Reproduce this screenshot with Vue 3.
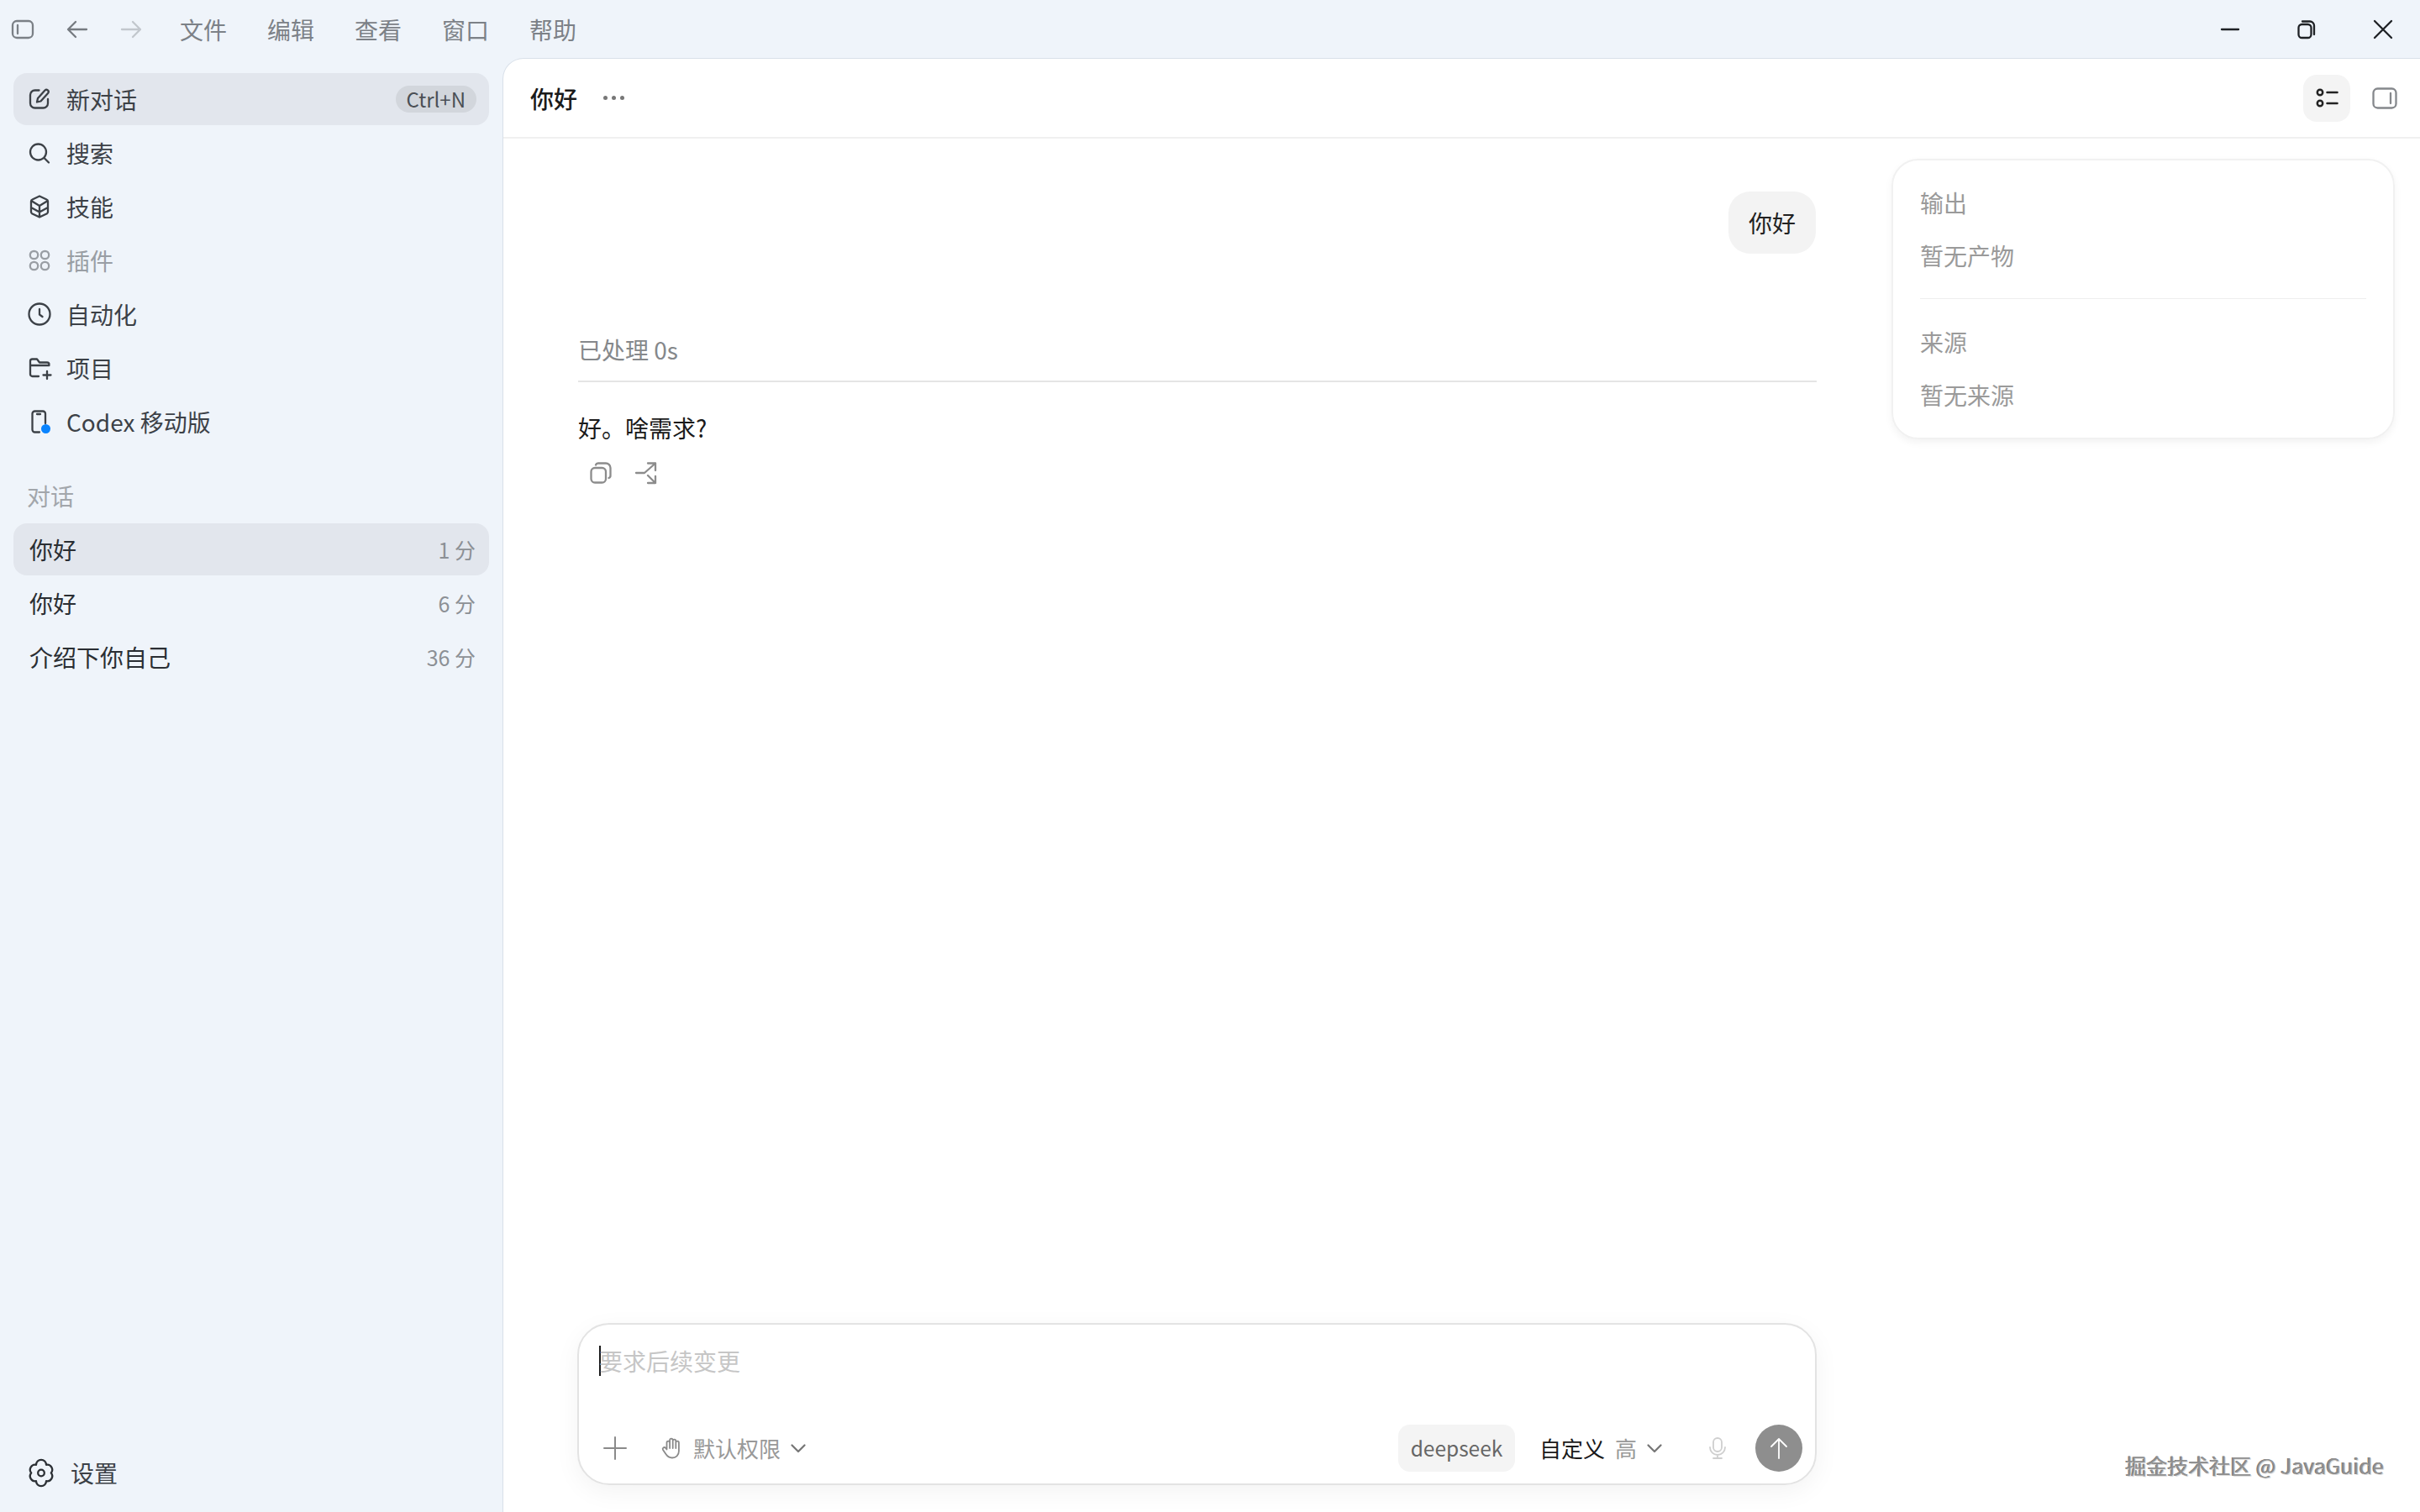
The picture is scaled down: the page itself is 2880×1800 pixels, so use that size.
<template>
  <div class="app">
    <!-- 顶部标题栏 -->
    <header class="titlebar">
      <div class="tb-left">
        <svg class="ic tb-toggle" viewBox="0 0 28 24"><rect x="2" y="2" width="24" height="20" rx="5" /><path d="M8 7v10" /></svg>
        <svg class="ic tb-arrow" viewBox="0 0 26 24"><path d="M24 12H3M11 3l-9 9 9 9" /></svg>
        <svg class="ic tb-arrow off" viewBox="0 0 26 24"><path d="M2 12h21M15 3l9 9-9 9" /></svg>
        <nav class="menu">
          <span v-for="m in menus" :key="m">{{ m }}</span>
        </nav>
      </div>
      <div class="win-ctrl">
        <svg class="ic" viewBox="0 0 24 24"><path d="M2 12h20" /></svg>
        <svg class="ic" viewBox="0 0 24 24"><rect x="2.5" y="6" width="15" height="16" rx="4" /><path d="M7 2.5h9a5 5 0 0 1 5 5V18" /></svg>
        <svg class="ic" viewBox="0 0 24 24"><path d="M2 2l20 20M22 2L2 22" /></svg>
      </div>
    </header>

    <div class="body">
      <!-- 侧边栏 -->
      <aside class="sidebar">
        <div class="nav">
          <div v-for="n in navs" :key="n.label" class="row nav-row" :class="{ active: n.active, muted: n.muted }">
            <svg class="ic nav-ic" viewBox="0 0 28 28">
              <path :d="n.icon" />
              <circle v-if="n.dot" cx="21.5" cy="22.5" r="5.5" class="dot" />
            </svg>
            <span class="row-label">{{ n.label }}</span>
            <kbd v-if="n.kbd">{{ n.kbd }}</kbd>
          </div>
        </div>

        <div class="section-title">对话</div>
        <div class="threads">
          <div v-for="t in threads" :key="t.title" class="row thread-row" :class="{ active: t.active }">
            <span class="row-label">{{ t.title }}</span>
            <span class="time">{{ t.time }}</span>
          </div>
        </div>

        <div class="settings">
          <svg class="ic gear" viewBox="0 0 28 29">
            <path d="M8 4.8A6 6 0 0 1 20 4.8 6 6 0 0 1 25.8 14.5 6 6 0 0 1 20 24.2 6 6 0 0 1 8 24.2 6 6 0 0 1 2.2 14.5 6 6 0 0 1 8 4.8z" />
            <circle cx="14" cy="14.5" r="3.8" />
          </svg>
          <span>设置</span>
        </div>
      </aside>

      <!-- 主面板 -->
      <main class="panel">
        <div class="panel-head">
          <div class="head-title">
            <strong>你好</strong>
            <span class="more"><i></i><i></i><i></i></span>
          </div>
          <div class="head-tools">
            <button class="tool-btn">
              <svg class="ic" viewBox="0 0 26 24"><circle cx="4.5" cy="5" r="3.2" /><circle cx="4.5" cy="18" r="3.2" /><path d="M13 5h12M13 18h12" /></svg>
            </button>
            <svg class="ic side-ic" viewBox="0 0 30 26"><rect x="1.5" y="1.5" width="27" height="23" rx="5" /><path d="M22 7v12" /></svg>
          </div>
        </div>

        <div class="panel-body">
          <section class="chat">
            <div class="thread">
              <div class="bubble">你好</div>
              <div class="processed">已处理 0s</div>
              <p class="answer">好。啥需求?</p>
              <div class="actions">
                <svg class="ic" viewBox="0 0 26 26"><rect x="1.5" y="7" width="17.5" height="17.5" rx="4.5" /><path d="M7 3.5A3 3 0 0 1 10 1.5h9a5.5 5.5 0 0 1 5.5 5.5v9a3 3 0 0 1-2 3" /></svg>
                <svg class="ic" viewBox="0 0 26 26"><path d="M1 13h10L24 1.5M15 1.5h9V10M15 16l9 9M15 25h9v-8" /></svg>
              </div>
            </div>

            <div class="composer">
              <div class="input-line">
                <span class="caret"></span>
                <span class="placeholder">要求后续变更</span>
              </div>
              <div class="composer-bar">
                <svg class="ic bar-plus" viewBox="0 0 26 26"><path d="M13 0v26M0 13h26" /></svg>
                <div class="perm">
                  <svg class="ic hand" viewBox="0 0 24 26"><path d="M5.5 14V6.5a1.8 1.8 0 0 1 3.6 0V3.5a1.8 1.8 0 0 1 3.6 0v1a1.8 1.8 0 0 1 3.6 0v2a1.8 1.8 0 0 1 3.6 0v10c0 5-3.5 8-8 8-3.5 0-5.5-1.5-7.500-4.500L1 15a1.9 1.9 0 0 1 3-2.300l1.500 1.800M9.100 6.500V13M12.700 4.500V13M16.300 6.500V13" /></svg>
                  <span>默认权限</span>
                  <svg class="ic chev" viewBox="0 0 18 11"><path d="M1.5 1.5L9 9l7.5-7.5" /></svg>
                </div>
                <div class="bar-right">
                  <span class="model">deepseek</span>
                  <div class="effort">
                    <span class="effort-name">自定义</span>
                    <span class="effort-level">高</span>
                    <svg class="ic chev" viewBox="0 0 18 11"><path d="M1.5 1.5L9 9l7.5-7.5" /></svg>
                  </div>
                  <svg class="ic mic" viewBox="0 0 22 26"><rect x="6" y="1" width="10" height="16" rx="5" /><path d="M2 12a9 9 0 0 0 18 0M11 21v4M6 25h10" /></svg>
                  <button class="send">
                    <svg class="ic" viewBox="0 0 24 26"><path d="M12 25V2M3 11l9-9 9 9" /></svg>
                  </button>
                </div>
              </div>
            </div>
          </section>

          <aside class="outputs">
            <div class="out-title">输出</div>
            <div class="out-text">暂无产物</div>
            <div class="out-divider"></div>
            <div class="out-title">来源</div>
            <div class="out-text">暂无来源</div>
          </aside>
        </div>
      </main>
    </div>

    <div class="watermark">掘金技术社区 @ JavaGuide</div>
  </div>
</template>

<script setup>
const menus = ['文件', '编辑', '查看', '窗口', '帮助']

const navs = [
  {
    label: '新对话',
    active: true,
    kbd: 'Ctrl+N',
    icon: 'M13.5 3.5H8.5A5.5 5.5 0 0 0 3 9v10a5.5 5.5 0 0 0 5.5 5.5h10a5.5 5.5 0 0 0 5.5-5.5v-5M11 17.5l1-4.5 8.5-9.5a2.5 2.5 0 0 1 3.8 3.200L15.500 16.500z'
  },
  { label: '搜索', icon: 'M12.5 3.5a9.5 9.5 0 1 0 0 19 9.5 9.5 0 0 0 0-19zM19.5 20l5.5 5.5' },
  {
    label: '技能',
    icon: 'M14 1.5l8.5 4A2.5 2.5 0 0 1 24 7.8v12.4a2.5 2.5 0 0 1-1.5 2.3l-8.5 4-8.5-4A2.5 2.5 0 0 1 4 20.200V7.800a2.500 2.500 0 0 1 1.500-2.300zM5 7.500l9 5.500 9-5.500M14 13v13.500M4 15l10 5.500M24 15l-10 5.500'
  },
  {
    label: '插件',
    muted: true,
    icon: 'M7.5 2.8a4.7 4.7 0 1 0 0 9.4 4.7 4.7 0 0 0 0-9.4zM20.5 2.8a4.7 4.7 0 1 0 0 9.4 4.7 4.7 0 0 0 0-9.4zM7.5 15.8a4.7 4.7 0 1 0 0 9.4 4.7 4.7 0 0 0 0-9.4zM20.5 15.8a4.7 4.7 0 1 0 0 9.4 4.7 4.7 0 0 0 0-9.4z'
  },
  { label: '自动化', icon: 'M14 1.5a12.5 12.5 0 1 0 0 25 12.5 12.5 0 0 0 0-25zM14 8v6.5l3.5 2.5' },
  {
    label: '项目',
    icon: 'M13 24H5.5A2.5 2.5 0 0 1 3 21.500V6a2.500 2.500 0 0 1 2.500-2.500H11L14 7.500h9a2.500 2.500 0 0 1 2.500 2.500M3 11h22.500M23 18v9M18.500 22.500h9'
  },
  {
    label: 'Codex 移动版',
    dot: true,
    icon: 'M14 26.5H8.5a3 3 0 0 1-3-3V4.500a3 3 0 0 1 3-3h9.500a3 3 0 0 1 3 3V16M11 5h4'
  }
]

const threads = [
  { title: '你好', time: '1 分', active: true },
  { title: '你好', time: '6 分' },
  { title: '介绍下你自己', time: '36 分' }
]
</script>

<style>
html,
body {
  margin: 0;
  background: #eff4fa;
}
</style>

<style scoped>
.app {
  position: relative;
  width: 2880px;
  height: 1800px;
  overflow: hidden;
  display: flex;
  flex-direction: column;
  background: #eff4fa;
  color: #3c4147;
  font-family: "Noto Sans CJK SC", "Open Sans", sans-serif;
  font-size: 28px;
  line-height: 40px;
}

.ic {
  display: block;
  fill: none;
  stroke: currentColor;
  stroke-width: 2.3;
  stroke-linecap: round;
  stroke-linejoin: round;
  flex: none;
  overflow: visible;
}

/* 标题栏 */
.titlebar {
  height: 70px;
  flex: none;
  display: flex;
  align-items: center;
  justify-content: space-between;
}

.tb-left {
  display: flex;
  align-items: center;
  padding-left: 13px;
}

.tb-toggle {
  width: 28px;
  height: 24px;
  color: #7b8086;
}

.tb-arrow {
  width: 26px;
  height: 24px;
  margin-left: 38px;
  color: #767b81;
}

.tb-arrow.off {
  color: #c2c7cd;
}

.menu {
  display: flex;
  gap: 48px;
  margin-left: 45px;
  color: #7c8187;
}

.win-ctrl {
  display: flex;
  align-items: center;
  gap: 67px;
  padding-right: 32px;
  color: #1e2125;
}

.win-ctrl .ic {
  width: 24px;
  height: 24px;
}

/* 侧边栏 */
.body {
  flex: 1;
  min-height: 0;
  display: flex;
}

.sidebar {
  width: 599px;
  flex: none;
  box-sizing: border-box;
  padding: 17px 17px 27px 16px;
  display: flex;
  flex-direction: column;
}

.nav,
.threads {
  display: flex;
  flex-direction: column;
  gap: 2px;
}

.row {
  height: 62px;
  display: flex;
  align-items: center;
  border-radius: 16px;
  padding: 0 16px 0 19px;
}

.nav-row {
  padding-left: 17px;
}

.row.active {
  background: #e2e6ed;
}

.nav-ic {
  width: 28px;
  height: 28px;
  margin-right: 18px;
  color: #3c4147;
}

.muted,
.muted .nav-ic {
  color: #999ea4;
}

.dot {
  fill: #0a84ff;
  stroke: none;
}

.row-label {
  flex: 1;
}

kbd {
  font: inherit;
  font-size: 24px;
  line-height: 32px;
  padding: 0 13px;
  margin-right: -1px;
  border-radius: 16px;
  background: #d2d6dc;
  color: #4a4f55;
}

.section-title {
  margin: 37px 0 13px 16px;
  color: #a2a6ab;
}

.thread-row .row-label {
  color: #2a2e33;
}

.time {
  font-size: 25px;
  color: #8c9095;
}

.settings {
  margin-top: auto;
  padding-left: 19px;
  display: flex;
  align-items: center;
}

.gear {
  width: 28px;
  height: 29px;
  margin-right: 21px;
  color: #2c3035;
}

/* 主面板 */
.panel {
  flex: 1;
  min-width: 0;
  display: flex;
  flex-direction: column;
  background: #fff;
  border-top-left-radius: 24px;
  box-shadow: 0 0 0 1px #d9e0e9;
}

.panel-head {
  height: 95px;
  flex: none;
  box-sizing: border-box;
  border-bottom: 2px solid #f0f0f0;
  display: flex;
  align-items: center;
  justify-content: space-between;
  padding: 0 27px 0 32px;
}

.head-title {
  display: flex;
  align-items: center;
  gap: 31px;
}

.head-title strong {
  font-weight: 500;
  color: #1a1a1a;
}

.more {
  display: flex;
  gap: 5px;
}

.more i {
  width: 5px;
  height: 5px;
  border-radius: 50%;
  background: #777;
}

.head-tools {
  display: flex;
  align-items: center;
  gap: 26px;
}

.tool-btn {
  width: 56px;
  height: 56px;
  border: 0;
  padding: 0;
  border-radius: 16px;
  background: #f4f4f4;
  display: flex;
  align-items: center;
  justify-content: center;
  color: #222;
}

.tool-btn .ic {
  width: 27px;
  height: 24px;
  stroke-width: 2.5;
}

.side-ic {
  width: 30px;
  height: 26px;
  color: #85888c;
}

.panel-body {
  flex: 1;
  min-height: 0;
  display: flex;
  gap: 89px;
  padding: 0 30px 32px 89px;
}

.chat {
  flex: 1;
  min-width: 0;
  display: flex;
  flex-direction: column;
}

.thread {
  flex: 1;
  min-height: 0;
  padding-top: 63px;
}

.bubble {
  width: fit-content;
  margin: 0 1px 0 auto;
  padding: 17px 24px;
  border-radius: 26px;
  background: #f3f3f3;
  color: #222;
}

.processed {
  margin-top: 94px;
  padding-bottom: 17px;
  border-bottom: 2px solid #e5e5e5;
  color: #85888b;
}

.answer {
  margin: 34px 0 0;
  color: #1a1a1a;
}

.actions {
  display: flex;
  gap: 28px;
  margin: 21px 0 0 14px;
  color: #8c8c8c;
}

.actions .ic {
  width: 26px;
  height: 26px;
}

.composer {
  flex: none;
  height: 193px;
  box-sizing: border-box;
  margin-left: -1px;
  border: 2px solid #e3e3e3;
  border-radius: 38px;
  padding: 23px 15px 14px 24px;
  display: flex;
  flex-direction: column;
  justify-content: space-between;
  box-shadow: 0 8px 30px rgba(0, 0, 0, 0.05);
}

.input-line {
  display: flex;
  align-items: center;
}

.caret {
  width: 2px;
  height: 36px;
  margin-right: -2px;
  background: #1a1a1a;
}

.placeholder {
  color: #c6c6c6;
}

.composer-bar {
  display: flex;
  align-items: center;
}

.bar-plus {
  width: 26px;
  height: 26px;
  margin-left: 6px;
  color: #8a8a8a;
  stroke-width: 2;
}

.perm {
  display: flex;
  align-items: center;
  margin-left: 43px;
  font-size: 26px;
  color: #999;
}

.hand {
  width: 24px;
  height: 26px;
  margin-right: 13px;
  color: #8a8a8a;
  stroke-width: 1.8;
}

.chev {
  width: 18px;
  height: 11px;
  margin-left: 12px;
  color: #777;
}

.bar-right {
  margin-left: auto;
  display: flex;
  align-items: center;
  font-size: 26px;
}

.model {
  width: 139px;
  height: 56px;
  line-height: 56px;
  text-align: center;
  font-size: 24.5px;
  border-radius: 14px;
  background: #f4f4f4;
  color: #666;
}

.effort {
  display: flex;
  align-items: center;
  margin-left: 29px;
  color: #1a1a1a;
}

.effort-level {
  margin-left: 12px;
  color: #999;
}

.mic {
  width: 22px;
  height: 26px;
  margin-left: 55px;
  color: #cfcfcf;
  stroke-width: 1.8;
}

.send {
  width: 56px;
  height: 56px;
  margin-left: 34px;
  border: 0;
  padding: 0;
  border-radius: 50%;
  background: #8e8e8e;
  display: flex;
  align-items: center;
  justify-content: center;
  color: #fff;
}

.send .ic {
  width: 24px;
  height: 26px;
  stroke-width: 1.8;
}

/* 输出卡片 */
.outputs {
  width: 599px;
  height: 334px;
  flex: none;
  box-sizing: border-box;
  margin-top: 24px;
  padding: 30px 32px;
  border: 2px solid #f1f1f1;
  border-radius: 32px;
  box-shadow: 0 4px 10px rgba(0, 0, 0, 0.05);
  color: #9a9a9a;
}

.out-text {
  margin-top: 23px;
}

.out-divider {
  height: 1px;
  margin: 31px 0;
  background: #eeeeee;
}

/* 水印叠加层 */
.watermark {
  position: absolute;
  right: 43px;
  bottom: 36px;
  font-size: 25px;
  line-height: 40px;
  color: #909090;
  text-shadow: 1px 1px 0 #ddd, -1px 0 0 #777;
}
</style>
